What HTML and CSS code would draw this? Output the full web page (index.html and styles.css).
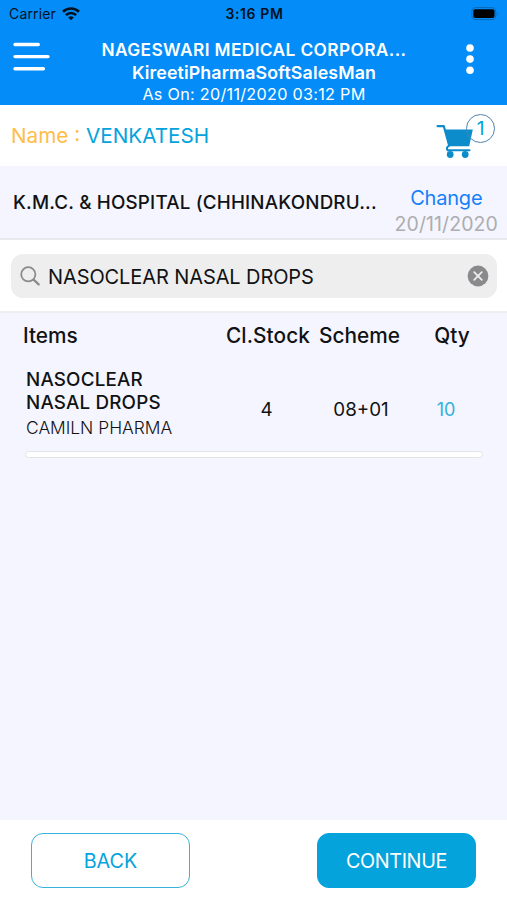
FILE: index.html
```html
<!DOCTYPE html>
<html lang="en">
<head>
  <meta charset="UTF-8" />
  <meta name="viewport" content="width=device-width, initial-scale=1.0"/>
  <title>Sales Order</title>
  <link rel="stylesheet" href="styles.css">
</head>
<body>

  <header>
    <div class="status-bar">
      <div class="carrier">
        <span>Carrier</span>
        <svg width="18" height="14" viewBox="0 0 18 14" fill="none" stroke="#03111f" stroke-width="2.6">
          <path d="M1 4.8a11.4 11.4 0 0 1 16 0" />
          <path d="M3.9 8.1a7.2 7.2 0 0 1 10.2 0" />
          <path d="M9 13.3 6.2 10.5a4 4 0 0 1 5.6 0z" fill="#03111f" stroke="none" />
        </svg>
      </div>
      <div class="time">3:16 PM</div>
      <svg class="battery" width="30" height="14" viewBox="0 0 30 14">
        <rect x="1.8" y="0.6" width="24" height="12" rx="3.6" fill="none" stroke="#0668b5" />
        <rect x="3.3" y="2.3" width="21.2" height="8.6" rx="2" fill="#000" />
        <path d="M27.5 5v4q1.8-2 0-4" fill="#0668b5" />
      </svg>
    </div>
    <div class="nav-bar">
      <svg class="menu-icon" width="38" height="32" viewBox="0 0 38 32" stroke="#fff" stroke-width="3.4" stroke-linecap="round">
        <path d="M3 3.5h23.3M3 15.6h33M3 27.7h28.4" />
      </svg>
      <div class="titles">
        <h1>NAGESWARI MEDICAL CORPORA...</h1>
        <h2>KireetiPharmaSoftSalesMan</h2>
        <p>As On: 20/11/2020 03:12 PM</p>
      </div>
      <svg class="dots-icon" width="10" height="32" viewBox="0 0 10 32" fill="#fff">
        <circle cx="5" cy="5" r="3.8" />
        <circle cx="5" cy="16.1" r="3.8" />
        <circle cx="5" cy="27.2" r="3.8" />
      </svg>
    </div>
  </header>

  <div class="name-row">
    <p class="name"><span class="label">Name :</span> <span class="value">VENKATESH</span></p>
    <div class="cart">
      <svg width="38" height="36" viewBox="0 0 38 36" fill="#0c8ccb">
        <path d="M1.5 2.1h6.3l5.4 19.5q-3.6 2-1.6 4.6H33.5" fill="none" stroke="#0c8ccb" stroke-width="2.1" stroke-linecap="round" stroke-linejoin="round" />
        <path d="M8.8 5.6h28l-3.6 16.6H12.6z" />
        <circle cx="14.2" cy="30.5" r="3.4" />
        <circle cx="29.2" cy="30.5" r="3.4" />
      </svg>
      <span class="badge">1</span>
    </div>
  </div>

  <div class="customer-row">
    <p class="customer">K.M.C. &amp; HOSPITAL (CHHINAKONDRU...</p>
    <div class="change">
      <a href="#">Change</a>
      <span>20/11/2020</span>
    </div>
  </div>

  <div class="search-row">
    <div class="search-box">
      <svg width="20" height="20" viewBox="0 0 20 20" fill="none" stroke="#8b8b8e" stroke-width="1.8" stroke-linecap="round">
        <circle cx="8.3" cy="8.3" r="7.1" />
        <path d="M13.6 13.6l5 4.8" stroke-width="2.2" />
      </svg>
      <span class="search-text">NASOCLEAR NASAL DROPS</span>
      <svg width="22" height="22" viewBox="0 0 22 22">
        <circle cx="11" cy="11" r="10.4" fill="#8a8a8d" />
        <path d="M7.2 7.2l7.6 7.6M14.8 7.2l-7.6 7.6" stroke="#eee" stroke-width="1.7" stroke-linecap="round" />
      </svg>
    </div>
  </div>

  <main>
    <div class="item-grid table-head">
      <span class="items">Items</span>
      <span class="stock">Cl.Stock</span>
      <span class="scheme">Scheme</span>
      <span class="qty">Qty</span>
    </div>
    <div class="item-grid item">
      <div class="product">
        <h3>NASOCLEAR<br>NASAL DROPS</h3>
        <p>CAMILN PHARMA</p>
      </div>
      <span class="stock">4</span>
      <span class="scheme">08+01</span>
      <span class="qty">10</span>
    </div>
    <div class="divider"></div>
  </main>

  <footer>
    <button class="btn back">BACK</button>
    <button class="btn continue">CONTINUE</button>
  </footer>

</body>
</html>
```
FILE: styles.css
```css
:root {
  --header-color: #048df8;
  --main-color: #04a3dc;
  --link-color: #1680fa;
  --label-color: #ffbd4a;
  --light-bg: #f4f5fe;
  --dark-text: #111214;
}

* {
  box-sizing: border-box;
  margin: 0;
  padding: 0;
}

body, html {
  font-family: Inter, "Liberation Sans", sans-serif;
  height: 100%;
  background-color: #fff;
  color: var(--dark-text);
}

body {
  display: flex;
  flex-direction: column;
  overflow: hidden;
}

svg {
  display: block;
  flex-shrink: 0;
}

header {
  height: 105px;
  background-color: var(--header-color);
}

.status-bar {
  display: grid;
  grid-template-columns: 1fr auto 1fr;
  align-items: center;
  height: 27px;
  padding: 0 7px 0 9px;
  font-size: 14px;
  color: #03111f;
}

.carrier {
  display: flex;
  align-items: center;
  gap: 6px;
  letter-spacing: 0.15px;
}

.time {
  font-weight: 600;
  letter-spacing: 0.6px;
}

.battery {
  justify-self: end;
}

.nav-bar {
  display: flex;
  justify-content: space-between;
  padding: 12px 32px 0 12px;
  color: #fff;
}

.menu-icon {
  margin-top: 2px;
}

.dots-icon {
  margin-top: 4px;
}

.titles {
  margin-right: 7px;
  text-align: center;
  white-space: nowrap;
}

.titles h1 {
  font-size: 17.3px;
  font-weight: 600;
  line-height: 22px;
  letter-spacing: 0.4px;
}

.titles h2 {
  font-size: 17.8px;
  font-weight: 600;
  line-height: 24px;
  letter-spacing: 0.12px;
}

.titles p {
  font-size: 16.2px;
  line-height: 19px;
  letter-spacing: 0.28px;
}

.name-row {
  display: flex;
  justify-content: space-between;
  height: 61px;
  padding: 0 12px 0 11px;
}

.name {
  font-size: 20.7px;
  line-height: 61px;
}

.name .label {
  color: var(--label-color);
}

.name .value {
  color: var(--main-color);
}

.cart {
  position: relative;
  width: 59px;
  padding-top: 19px;
}

.badge {
  position: absolute;
  top: 9px;
  right: 0;
  width: 29px;
  height: 29px;
  border: 1.5px solid #5183ae;
  border-radius: 50%;
  font-size: 19px;
  line-height: 28px;
  text-align: center;
  color: var(--main-color);
}

.customer-row {
  display: flex;
  justify-content: space-between;
  height: 74px;
  padding: 0 9px 0 13px;
  background-color: var(--light-bg);
  border-bottom: 2px solid #e8e9ec;
  white-space: nowrap;
}

.customer {
  font-size: 18.8px;
  font-weight: 500;
  line-height: 73px;
  letter-spacing: 0.18px;
}

.change {
  display: flex;
  flex-direction: column;
  align-items: center;
  padding-top: 19px;
}

.change a {
  font-size: 20px;
  line-height: 26px;
  letter-spacing: -0.2px;
  color: var(--link-color);
  text-decoration: none;
}

.change span {
  font-size: 19.5px;
  line-height: 27px;
  letter-spacing: 0.1px;
  color: #adadb0;
}

.search-row {
  height: 73px;
  padding: 14px 10px 0 11px;
  border-bottom: 2px solid #ededf2;
}

.search-box {
  display: flex;
  align-items: center;
  height: 44px;
  padding: 0 8px 0 9px;
  background-color: #eee;
  border-radius: 12px;
}

.search-text {
  flex: 1;
  margin: 1px 0 0 8px;
  font-size: 20px;
  letter-spacing: -0.1px;
  white-space: nowrap;
}

main {
  flex: 1;
  background-color: var(--light-bg);
}

.item-grid {
  display: grid;
  grid-template-columns: 202px 86px 103px 76px;
  align-items: center;
  padding-left: 23px;
  text-align: center;
  white-space: nowrap;
}

.table-head {
  height: 44px;
  font-size: 20.8px;
  font-weight: 500;
}

.table-head .items {
  text-align: left;
}

.table-head .stock {
  letter-spacing: 0.1px;
}

.table-head .scheme {
  padding-right: 6px;
}

.item {
  height: 94px;
  padding-top: 1px;
  font-size: 18.8px;
}

.item .stock {
  padding: 10px 3px 0 0;
}

.item .scheme {
  padding: 10px 3px 0 0;
}

.item .qty {
  padding: 10px 12px 0 0;
  font-size: 18px;
  color: #33b0e0;
}

.product {
  padding-left: 3px;
  text-align: left;
}

.product h3 {
  font-size: 18.8px;
  font-weight: 500;
  line-height: 23px;
  letter-spacing: 0.18px;
}

.product p {
  font-size: 17.4px;
  font-weight: 300;
  line-height: 27px;
}

.divider {
  height: 7px;
  margin: 0 24px 0 25px;
  background-color: #fff;
  border: 1px solid #e4e4e8;
  border-radius: 4px;
}

footer {
  display: flex;
  justify-content: space-between;
  height: 80px;
  padding: 13px 31px 0;
}

.btn {
  width: 159px;
  height: 55px;
  border: 1.5px solid #36b2dd;
  border-radius: 12px;
  font-family: inherit;
  font-size: 19.8px;
}

.back {
  background-color: #fff;
  color: var(--main-color);
}

.continue {
  background-color: var(--main-color);
  border-color: var(--main-color);
  color: #fff;
  letter-spacing: -0.4px;
}
```
